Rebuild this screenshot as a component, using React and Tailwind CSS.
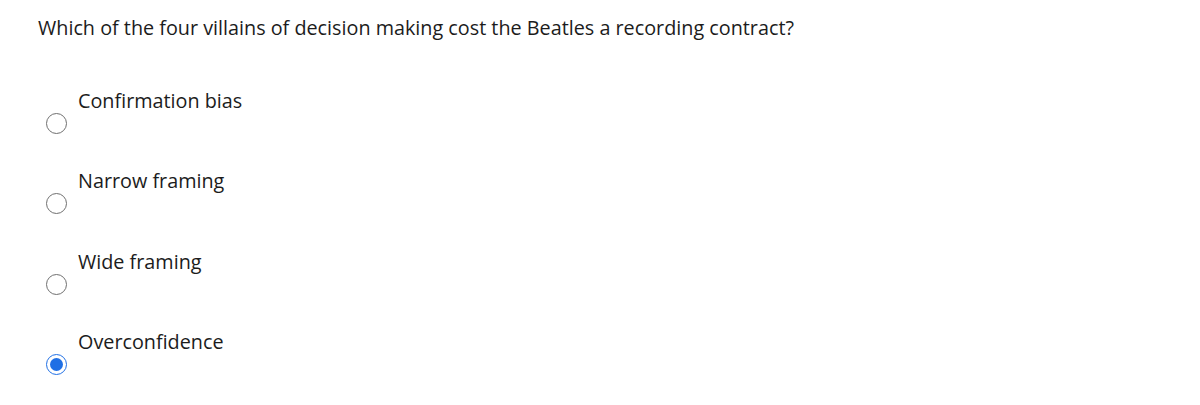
import React, { useState } from 'react';

const options = ['Confirmation bias', 'Narrow framing', 'Wide framing', 'Overconfidence'];

const Radio = ({ checked }) => (
  <span
    className={`flex items-center justify-center w-[21px] h-[21px] rounded-full border-[1.5px] bg-white ${
      checked ? 'border-[#1f6fe5]' : 'border-[#6f6f6f]'
    }`}
  >
    {checked && <span className="w-[13px] h-[13px] rounded-full bg-[#1f6fe5]" />}
  </span>
);

export default function App() {
  const [selected, setSelected] = useState(3);

  return (
    <div className="w-[1200px] h-[405px] bg-white text-[#1c1c1c] font-['Open_Sans',sans-serif] overflow-hidden">
      <div className="pt-[14px] pl-[38px]">
        <p className="text-[19.8px] leading-[28px]">
          Which of the four villains of decision making cost the Beatles a recording contract?
        </p>
        <div className="mt-[45px] pl-[8px] flex flex-col gap-[33.3px]">
          {options.map((opt, i) => (
            <label
              key={opt}
              className="flex items-start gap-[11px] cursor-pointer"
              onClick={() => setSelected(i)}
            >
              <span className="mt-[26px]">
                <Radio checked={selected === i} />
              </span>
              <span className="text-[19.8px] leading-[27px]">{opt}</span>
            </label>
          ))}
        </div>
      </div>
    </div>
  );
}
